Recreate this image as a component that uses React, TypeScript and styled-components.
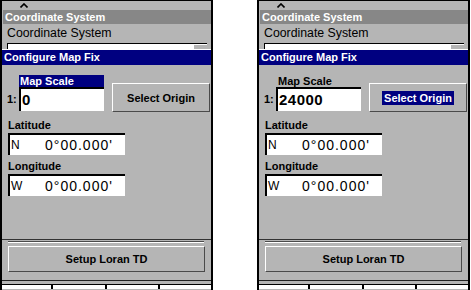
import React from "react";
import styled, { createGlobalStyle } from "styled-components";

const panelGrey = "#b5b5b5";
const titleGrey = "#878787";
const navy = "#000080";

const GlobalStyle = createGlobalStyle`
  * { box-sizing: border-box; }
  body {
    margin: 0;
    background: #ffffff;
    font-family: "Liberation Sans", Arial, sans-serif;
  }
`;

const Screen = styled.div`
  display: flex;
  gap: 44px;
  width: 471px;
  height: 290px;
  overflow: hidden;
`;

const Panel = styled.section`
  width: 213px;
  height: 290px;
  display: flex;
  flex-direction: column;
  background: ${panelGrey};
  border-top: 1px solid #000;
  border-left: 2px solid #000;
  border-right: 2px solid #000;
`;

const CaretRow = styled.div`
  height: 9px;
  padding: 2px 0 0 18px;
  svg {
    display: block;
  }
`;

const TitleBar = styled.div<{ $tone: "grey" | "navy" }>`
  height: ${(p) => (p.$tone === "navy" ? 15 : 14)}px;
  margin-left: ${(p) => (p.$tone === "navy" ? 0 : 1)}px;
  padding-left: 2px;
  background: ${(p) => (p.$tone === "navy" ? navy : titleGrey)};
  color: #fff;
  font-size: 11px;
  font-weight: bold;
  line-height: ${(p) => (p.$tone === "navy" ? 15 : 14)}px;
  white-space: nowrap;
`;

const SectionLabel = styled.div`
  height: 19px;
  padding-left: 5px;
  font-size: 12.3px;
  line-height: 19px;
  color: #000;
`;

const SelectStub = styled.div`
  height: 6px;
  width: 200px;
  margin-left: 5px;
  background: #fff;
  border-top: 1px solid #000;
  border-left: 1px solid #000;
  display: flex;
  justify-content: flex-end;
  padding-top: 1px;
  &::after {
    content: "";
    width: 13px;
    background: ${panelGrey};
  }
`;

const Dialog = styled.div`
  height: 191px;
  display: flex;
  flex-direction: column;
  border-top: 1px solid #fff;
  border-bottom: 1px solid #333;
`;

const DialogBody = styled.div`
  flex: 1;
  display: flex;
  flex-direction: column;
  padding: 10px 0 0 4px;
`;

const ScaleRow = styled.div`
  display: flex;
  align-items: flex-end;
`;

const ScaleBlock = styled.div`
  display: grid;
  grid-template-columns: 13px 85px;
  grid-template-rows: 12px 24px;
`;

const ScaleTag = styled.div<{ $active: boolean }>`
  grid-column: 2;
  padding-left: ${(p) => (p.$active ? 1 : 2)}px;
  background: ${(p) => (p.$active ? navy : "transparent")};
  color: ${(p) => (p.$active ? "#fff" : "#000")};
  font-size: 11px;
  font-weight: bold;
  line-height: 12px;
`;

const Prefix = styled.div`
  font-size: 11px;
  font-weight: bold;
  line-height: 24px;
  padding-left: 1px;
`;

const ScaleInput = styled.div`
  background: #fff;
  border-top: 2px solid #000;
  border-left: 2px solid #000;
  padding-left: 1px;
  font-size: 15px;
  font-weight: bold;
  line-height: 21px;
  letter-spacing: 0.5px;
`;

const RaisedButton = styled.div<{ $width: number; $height: number }>`
  width: ${(p) => p.$width}px;
  height: ${(p) => p.$height}px;
  display: flex;
  align-items: center;
  justify-content: center;
  border-top: 1px solid #fff;
  border-left: 1px solid #fff;
  border-right: 1px solid #4a4a4a;
  border-bottom: 1px solid #4a4a4a;
  font-size: 11px;
  font-weight: bold;
  color: #000;
  white-space: nowrap;
`;

const OriginButton = styled(RaisedButton)`
  margin-left: 8px;
  margin-bottom: -1px;
`;

const Highlight = styled.span<{ $on: boolean }>`
  padding: 1px 2px;
  background: ${(p) => (p.$on ? navy : "transparent")};
  color: ${(p) => (p.$on ? "#fff" : "#000")};
`;

const FieldLabel = styled.div<{ $gap: number }>`
  margin-top: ${(p) => p.$gap}px;
  padding-left: 2px;
  height: 14px;
  font-size: 11px;
  font-weight: bold;
  line-height: 14px;
`;

const CoordField = styled.div`
  width: 117px;
  height: 22px;
  margin-left: 2px;
  margin-top: 1px;
  display: flex;
  align-items: center;
  background: #fff;
  border-top: 2px solid #000;
  border-left: 2px solid #000;
  padding-left: 1px;
`;

const Hemisphere = styled.span`
  width: 34px;
  font-size: 12px;
`;

const CoordValue = styled.span`
  font-size: 14px;
  letter-spacing: 1px;
`;

const Groove = styled.div`
  margin: 1px 7px 0 6px;
  height: 2px;
  border-top: 1px solid #4a4a4a;
  border-bottom: 1px solid #fff;
`;

const SetupButton = styled(RaisedButton)`
  margin: 3px 0 0 6px;
`;

const SoftKeys = styled.div`
  margin-top: 8px;
  display: flex;
  flex-direction: column;
  border-top: 1px solid #222;
`;

const KeyGap = styled.div`
  height: 4px;
  border-bottom: 1px solid #000;
`;

const KeyRow = styled.div`
  height: 4px;
  display: grid;
  grid-template-columns: 51px 54px 53px 1fr;
  background: #fff;
`;

const KeyCell = styled.div`
  border-right: 2px solid #000;
  &:last-child {
    border-right: none;
  }
`;

type PanelProps = {
  scaleActive: boolean;
  scale: string;
  originActive: boolean;
};

function MapFixPanel({ scaleActive, scale, originActive }: PanelProps) {
  return (
    <Panel>
      <CaretRow>
        <svg width="8" height="5" viewBox="0 0 8 5">
          <polyline points="0.5,4.5 4,1 7.5,4.5" fill="none" stroke="#000" strokeWidth="1.6" />
        </svg>
      </CaretRow>
      <TitleBar $tone="grey">Coordinate System</TitleBar>
      <SectionLabel>Coordinate System</SectionLabel>
      <SelectStub />
      <Dialog>
        <TitleBar $tone="navy">Configure Map Fix</TitleBar>
        <DialogBody>
          <ScaleRow>
            <ScaleBlock>
              <ScaleTag $active={scaleActive}>Map Scale</ScaleTag>
              <Prefix>1:</Prefix>
              <ScaleInput>{scale}</ScaleInput>
            </ScaleBlock>
            <OriginButton $width={98} $height={29}>
              <Highlight $on={originActive}>Select Origin</Highlight>
            </OriginButton>
          </ScaleRow>
          <FieldLabel $gap={7}>Latitude</FieldLabel>
          <CoordField>
            <Hemisphere>N</Hemisphere>
            <CoordValue>0°00.000'</CoordValue>
          </CoordField>
          <FieldLabel $gap={4}>Longitude</FieldLabel>
          <CoordField>
            <Hemisphere>W</Hemisphere>
            <CoordValue>0°00.000'</CoordValue>
          </CoordField>
        </DialogBody>
      </Dialog>
      <Groove />
      <SetupButton $width={197} $height={26}>
        Setup Loran TD
      </SetupButton>
      <SoftKeys>
        <KeyGap />
        <KeyRow>
          <KeyCell />
          <KeyCell />
          <KeyCell />
          <KeyCell />
        </KeyRow>
      </SoftKeys>
    </Panel>
  );
}

export default function App() {
  return (
    <>
      <GlobalStyle />
      <Screen>
        <MapFixPanel scaleActive scale="0" originActive={false} />
        <MapFixPanel scaleActive={false} scale="24000" originActive />
      </Screen>
    </>
  );
}
